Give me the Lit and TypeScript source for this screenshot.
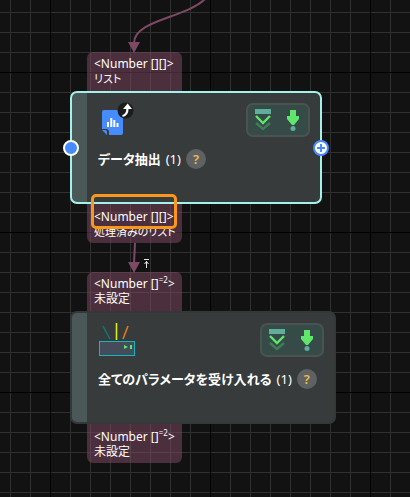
import { LitElement, html, svg, css, nothing } from "lit";
import { customElement, property } from "lit/decorators.js";
import { classMap } from "lit/directives/class-map.js";
import { styleMap } from "lit/directives/style-map.js";

interface Port {
  dims: string;
  sup?: string;
  label: string;
  marked?: boolean;
}

interface FlowNodeData {
  x: number;
  y: number;
  width: number;
  icon: "extract" | "device";
  title: string;
  selected: boolean;
  input: Port;
  output: Port;
}

const NODES: FlowNodeData[] = [
  {
    x: 70, y: 52, width: 252, icon: "extract", title: "データ抽出", selected: true,
    input: { dims: "[][]", label: "リスト" },
    output: { dims: "[][]", label: "処理済みのリスト", marked: true },
  },
  {
    x: 70, y: 272, width: 266, icon: "device", title: "全てのパラメータを受け入れる", selected: false,
    input: { dims: "[]", sup: "=2", label: "未設定" },
    output: { dims: "[]", sup: "=2", label: "未設定" },
  },
];

const KANA = /[\u3040-\u30ff]/;

const icons = {
  extract: svg`
    <path d="M6 12h17a2 2 0 0 1 2 2v21a2 2 0 0 1-2 2H11V34a3 3 0 0 0-3-3H4V14a2 2 0 0 1 2-2z" fill="#468cff"/>
    <path d="M4 32h3a2 2 0 0 1 2 2v3z" fill="#468cff"/>
    <path d="M10 29v-5M13.300 29v-9M16.300 29v-7M19.500 29v-4" stroke="#fff" stroke-width="2"/>
    <circle cx="27.500" cy="12.500" r="8" fill="#1c1c1c"/>
    <path d="M24.500 18q5-1 5-8" fill="none" stroke="#fff" stroke-width="2.200"/>
    <path d="M25 11l4.700-5.500L34 11z" fill="#fff"/>`,
  device: svg`
    <path d="M5 8l7 13" stroke="#0c7b7b" stroke-width="1.400"/>
    <path d="M18.500 5v17" stroke="#d2f01e" stroke-width="1.600"/>
    <path d="M30 8l-5 13" stroke="#d87a22" stroke-width="1.600"/>
    <rect x="1.500" y="23.500" width="35" height="14" fill="#454c59" stroke="#16b4bc"/>
    <path d="M26 27l4 2-4 2zM32 27h2v4h-2z" fill="#5fe36b"/>`,
};

@customElement("flow-port")
export class FlowPort extends LitElement {
  @property({ attribute: false }) port!: Port;
  @property({ type: Boolean, reflect: true }) output = false;

  static styles = css`
    :host {
      position: relative;
      box-sizing: border-box;
      min-width: 95px;
      height: 39px;
      margin-left: 17px;
      padding: 4px 6px 0 7px;
      border-radius: 6px 6px 0 0;
      background: rgba(131, 75, 102, 0.5);
      color: #fff;
      font-size: 12px;
      line-height: 15px;
      white-space: nowrap;
    }
    :host([output]) {
      padding-top: 5px;
      border-radius: 0 0 6px 6px;
    }
    .type,
    .label {
      display: block;
    }
    .label {
      font-feature-settings: "palt";
    }
    .label.kana {
      font-size: 11px;
    }
    sup {
      font-size: 8px;
      line-height: 0;
      vertical-align: 5px;
    }
    .mark {
      position: absolute;
      left: 4px;
      top: -10px;
      box-sizing: border-box;
      width: 86px;
      height: 35px;
      border: 3px solid #f7981d;
      border-radius: 5px;
    }
  `;

  render() {
    const { dims, sup, label, marked } = this.port;
    return html`
      <span class="type">&lt;Number ${dims}${sup ? html`<sup>${sup}</sup>` : nothing}&gt;</span>
      <span class=${classMap({ label: true, kana: KANA.test(label) })}>${label}</span>
      ${marked ? html`<span class="mark"></span>` : nothing}
    `;
  }
}

@customElement("flow-node")
export class FlowNode extends LitElement {
  @property({ attribute: false }) node!: FlowNodeData;

  static styles = css`
    :host {
      display: flex;
      flex-direction: column;
      align-items: flex-start;
    }
    .card {
      position: relative;
      box-sizing: border-box;
      display: flex;
      flex-direction: column;
      gap: 7px;
      width: 100%;
      height: 113px;
      padding: 5px 10px 0 26px;
      border: 2px solid #343938;
      border-radius: 7px;
      background: linear-gradient(to right, #4a5857 15px, #373b3b 15px);
    }
    .card.selected {
      border-color: #a3f2e9;
    }
    header {
      display: flex;
      justify-content: space-between;
      align-items: center;
      height: 44px;
    }
    .icon {
      width: 40px;
      height: 44px;
    }
    .actions {
      box-sizing: border-box;
      display: flex;
      align-items: center;
      justify-content: space-between;
      width: 64px;
      height: 34px;
      padding: 0 6px;
      border: 2px solid #475452;
      border-radius: 7px;
      background: #364b47;
    }
    button {
      display: grid;
      place-items: center;
      padding: 0;
      border: 0;
      background: none;
      font: inherit;
      cursor: pointer;
    }
    .actions svg {
      display: block;
      width: 18px;
      height: 24px;
    }
    .title {
      display: flex;
      align-items: center;
      gap: 5px;
      height: 20px;
      color: #fff;
      font-size: 13px;
      line-height: 20px;
      white-space: nowrap;
    }
    h2 {
      margin: 0;
      font-size: 13px;
      font-weight: 700;
      font-feature-settings: "palt";
    }
    .help {
      flex: none;
      width: 20px;
      height: 20px;
      border-radius: 50%;
      background: #5f6262;
      color: #efbb4d;
      font-size: 13px;
      font-weight: 600;
      line-height: 20px;
    }
    .handle {
      position: absolute;
      top: 47px;
      box-sizing: border-box;
      width: 16px;
      height: 16px;
      border-radius: 50%;
    }
    .handle.in {
      left: -9px;
      border: 2px solid #fff;
      background: #468cff;
    }
    .handle.out {
      right: -9px;
      border: 2px solid #468cff;
      background: #fff;
    }
  `;

  render() {
    const n = this.node;
    return html`
      <flow-port .port=${n.input}></flow-port>
      <section class=${classMap({ card: true, selected: n.selected })}>
        <header>
          <svg class="icon" viewBox="0 0 40 44" aria-hidden="true">${icons[n.icon]}</svg>
          <div class="actions">
            <button aria-label="下に展開">
              <svg viewBox="0 0 18 24">
                <path d="M1 1h16v5H1z" fill="#5fad9b" />
                <path d="M2 15l7 6 7-6" fill="none" stroke="#437b55" stroke-width="2.400" />
                <path d="M2 8l7 7 7-7" fill="none" stroke="#60e56d" stroke-width="2.400" />
              </svg>
            </button>
            <button aria-label="ここまで実行">
              <svg viewBox="0 0 18 24">
                <path d="M6 2h6v6h3v3l-5 6H8l-5-6V8h3z" fill="#60e56d" />
                <circle cx="9" cy="20.500" r="2.500" fill="#5fad9b" />
              </svg>
            </button>
          </div>
        </header>
        <div class="title">
          <h2>${n.title}</h2>
          <span>(1)</span>
          <button class="help" aria-label="ヘルプ">?</button>
        </div>
        ${n.selected
          ? html`
              <span class="handle in"></span>
              <button class="handle out" aria-label="追加">
                <svg width="12" height="12" viewBox="0 0 12 12">
                  <path d="M6 2v8M2 6h8" stroke="#468cff" stroke-width="2" />
                </svg>
              </button>
            `
          : nothing}
      </section>
      <flow-port output .port=${n.output}></flow-port>
    `;
  }
}

@customElement("app-root")
export class AppRoot extends LitElement {
  static styles = css`
    :host {
      display: block;
      position: relative;
      min-height: 100vh;
      overflow: hidden;
      font-family: "Noto Sans", "Noto Sans CJK JP", sans-serif;
      background-color: #121212;
      background-image:
        linear-gradient(to right, #000 1px, transparent 1px),
        linear-gradient(to bottom, #000 1px, transparent 1px),
        linear-gradient(to right, #303030 1px, transparent 1px),
        linear-gradient(to bottom, #303030 1px, transparent 1px);
      background-size: 160px 160px, 160px 160px, 20px 20px, 20px 20px;
      background-position: 50px 72px, 50px 72px, 10px 12px, 10px 12px;
    }
    .links {
      position: absolute;
      left: 0;
      top: 0;
      width: 100%;
      height: 100%;
    }
    flow-node {
      position: absolute;
    }
  `;

  render() {
    return html`
      ${NODES.map(
        (n) => html`<flow-node
          .node=${n}
          style=${styleMap({ left: `${n.x}px`, top: `${n.y}px`, width: `${n.width}px` })}
        ></flow-node>`
      )}
      <svg class="links" aria-hidden="true" pointer-events="none">
        <g fill="none" stroke="#7e4965" stroke-width="2">
          <path d="M205-1C186 18 134 20 134 43" />
          <path d="M135 243L134 263" />
        </g>
        <path d="M128 42h12l-6 11zM128 262h12l-6 11z" fill="#7e4965" />
        <path d="M144 259.500h5M146.500 261v7M144.500 264l2-2.500 2 2.500" fill="none" stroke="#e8e8e8" />
      </svg>
    `;
  }
}
